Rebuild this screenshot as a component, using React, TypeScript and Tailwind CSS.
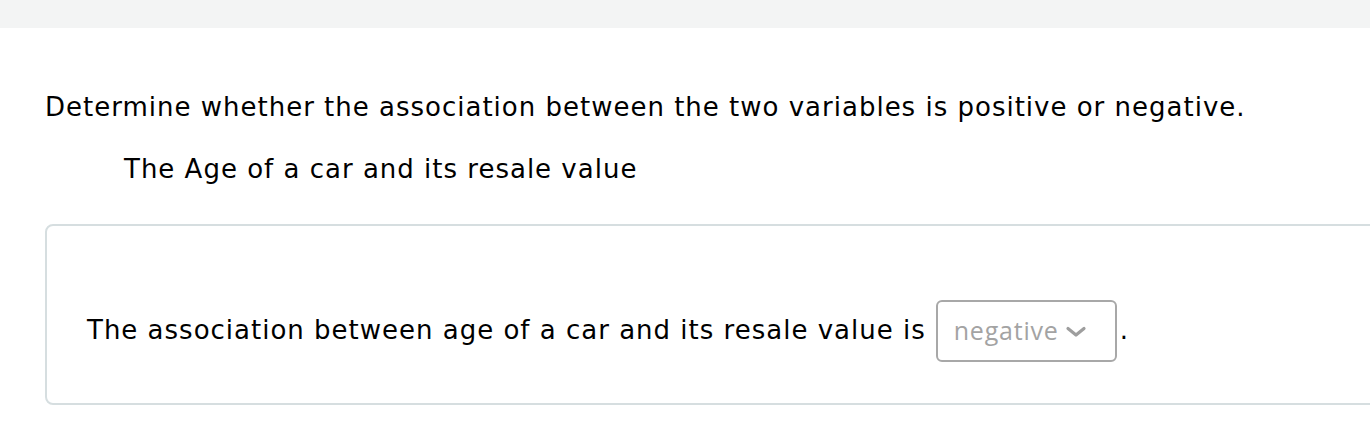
import React from "react";

const App = () => {
  return (
    <div className="w-[1370px] h-[438px] overflow-hidden bg-white text-black" style={{ fontFamily: '"DejaVu Sans", Verdana, sans-serif' }}>
      {/* top strip */}
      <div className="h-[28px] bg-[#f3f4f4]" />

      <div className="pl-[45px] pt-[64px] tracking-[1px]">
        <p className="text-[26px] leading-[30px]">
          Determine whether the association between the two variables is positive or negative.
        </p>
        <p className="text-[26px] leading-[30px] pl-[79px] mt-[32px]">The Age of a car and its resale value</p>

        {/* answer box */}
        <div className="mt-[40px] w-[1360px] h-[181px] border-2 border-[#d6dee0] rounded-[8px] flex items-center pl-[40px] pt-[32px]">
          <span className="text-[26px]">The association between age of a car and its resale value is</span>
          <div className="ml-[10px] w-[181px] h-[62px] border-2 border-[#a8a8a8] rounded-[6px] flex items-center pl-[16px] gap-[6px] bg-white tracking-normal">
            <span className="text-[25px] text-[#a3a3a3] tracking-[0.8px]" style={{ fontFamily: '"Open Sans", Lato, sans-serif' }}>negative</span>
            <svg width="22" height="14" viewBox="0 0 22 14" fill="none" className="mt-[3px]">
              <path d="M3 3.5l8 6.5 8-6.5" stroke="#9e9e9e" strokeWidth="3.2" strokeLinecap="round" strokeLinejoin="round" />
            </svg>
          </div>
          <span className="text-[26px] ml-[3px]">.</span>
        </div>
      </div>
    </div>
  );
};

export default App;
